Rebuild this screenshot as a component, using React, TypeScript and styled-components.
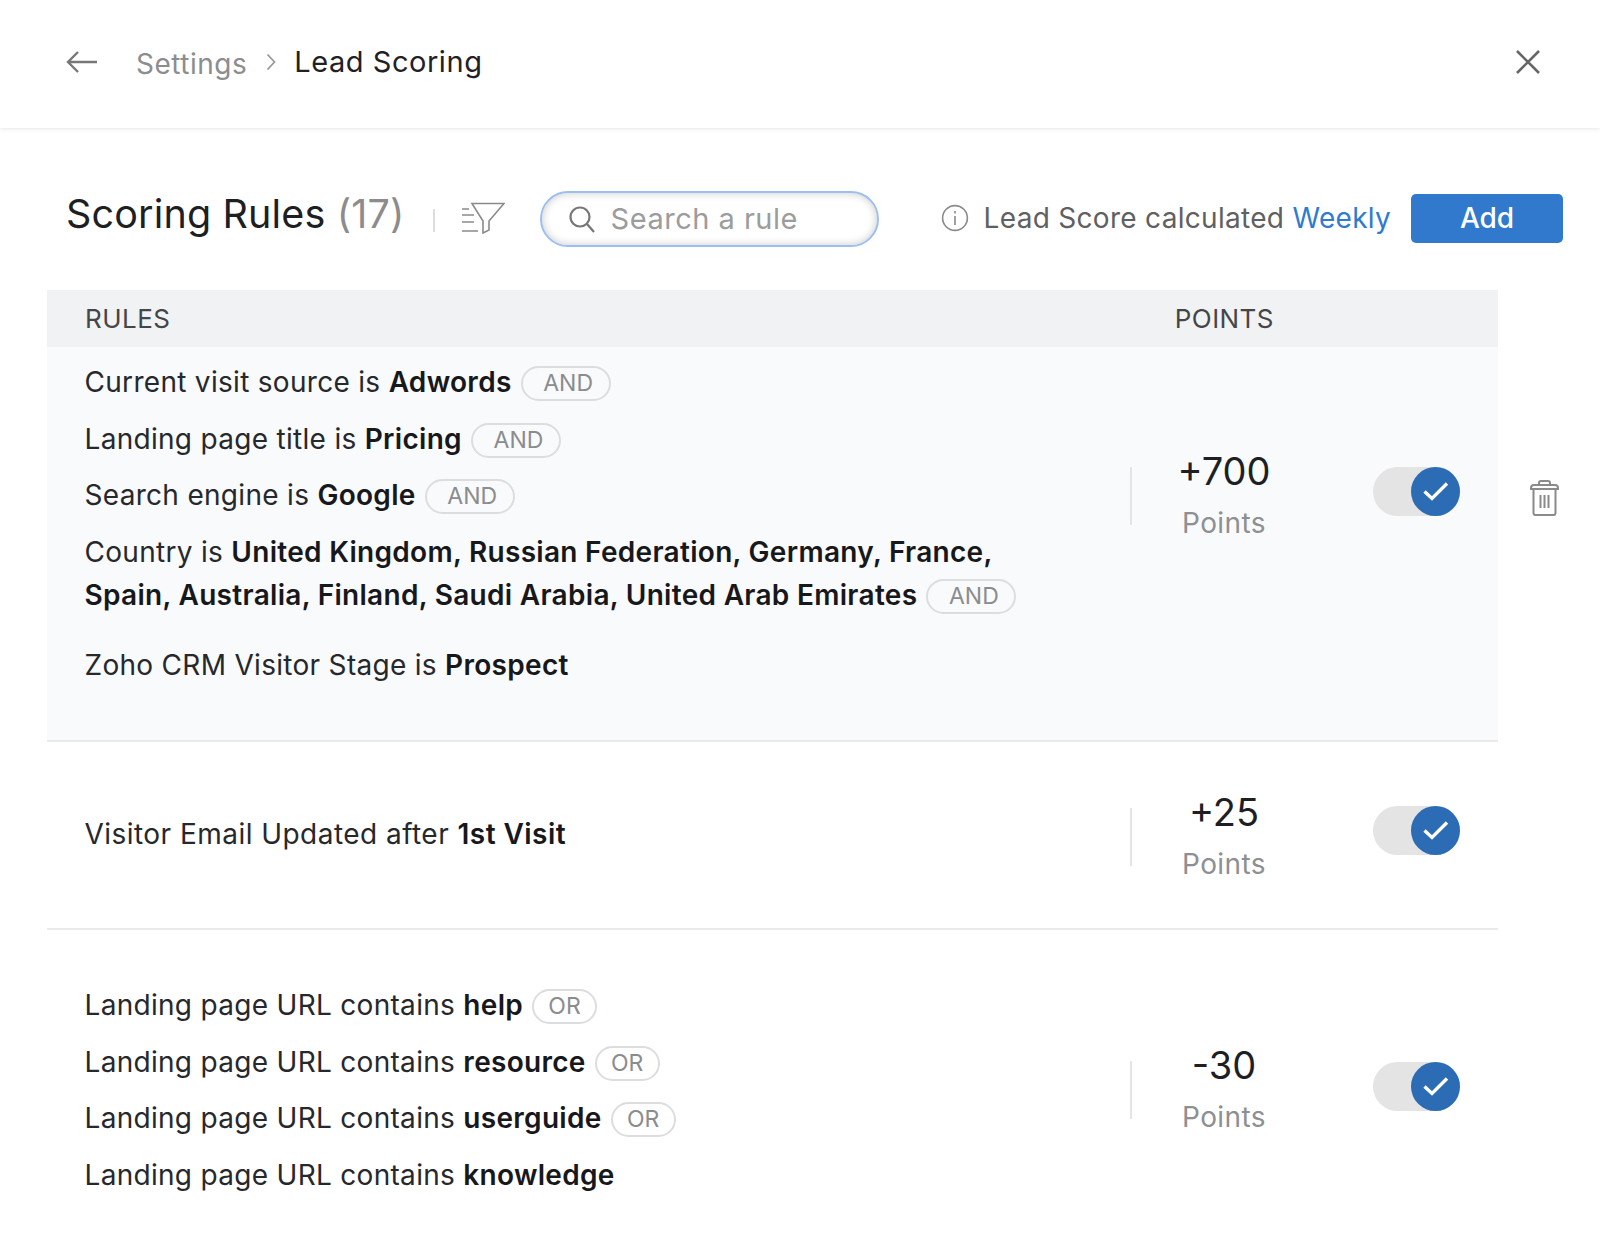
import styled, { createGlobalStyle } from "styled-components";
import { ReactNode } from "react";

const GlobalStyle = createGlobalStyle`
  * {
    box-sizing: border-box;
  }

  body {
    margin: 0;
    background: #ffffff;
    font-family: Inter, "Liberation Sans", sans-serif;
    color: #1d1f23;
    overflow: hidden;
  }
`;

type Line = { text: string; bold: ReactNode; tag?: string };

const firstRule: Line[] = [
  { text: "Current visit source is ", bold: "Adwords", tag: "AND" },
  { text: "Landing page title is ", bold: "Pricing", tag: "AND" },
  { text: "Search engine is ", bold: "Google", tag: "AND" },
];

const lastRule: Line[] = [
  { text: "Landing page URL contains ", bold: "help", tag: "OR" },
  { text: "Landing page URL contains ", bold: "resource", tag: "OR" },
  { text: "Landing page URL contains ", bold: "userguide", tag: "OR" },
  { text: "Landing page URL contains ", bold: "knowledge" },
];

function Toggle({ lift }: { lift: number }) {
  return (
    <Track $lift={lift}>
      <Knob>
        <svg width="26" height="20" viewBox="0 0 26 20" fill="none">
          <path d="M1.5 10.5 L9 17.5 L24 2.5" stroke="#fff" strokeWidth="3.4" />
        </svg>
      </Knob>
    </Track>
  );
}

function Score({ value }: { value: string }) {
  return (
    <ScoreCell>
      <ScoreValue>{value}</ScoreValue>
      <ScoreLabel>Points</ScoreLabel>
    </ScoreCell>
  );
}

function RuleLine({ line }: { line: Line }) {
  return (
    <RuleText>
      {line.text}
      <b>{line.bold}</b>
      {line.tag && <Tag $wide={line.tag === "AND"}>{line.tag}</Tag>}
    </RuleText>
  );
}

export default function App() {
  return (
    <Page>
      <GlobalStyle />
      <Header>
        <BackIcon width="32" height="24" viewBox="0 0 32 24" fill="none">
          <path d="M31 12 H2 M12 2 L2 12 L12 22" stroke="#777" strokeWidth="2.4" />
        </BackIcon>
        <Crumb>Settings</Crumb>
        <CrumbArrow width="10" height="18" viewBox="0 0 10 18" fill="none">
          <path d="M1.5 1.5 L8.5 9 L1.5 16.5" stroke="#999" strokeWidth="1.8" />
        </CrumbArrow>
        <Current>Lead Scoring</Current>
        <CloseIcon width="26" height="26" viewBox="0 0 26 26" fill="none">
          <path d="M2 2 L24 24 M24 2 L2 24" stroke="#666" strokeWidth="2.6" />
        </CloseIcon>
      </Header>

      <Toolbar>
        <Title>
          Scoring Rules <Count>(17)</Count>
        </Title>
        <ToolDivider />
        <svg width="43" height="32" viewBox="0 0 43 32" fill="none" stroke="#8a8a8a" strokeWidth="1.6">
          <path d="M10 1.5 H42 L27 19 V28 L21 31 V19 Z" />
          <path d="M0 7 H7 M0 13 H12 M0 20 H12 M0 29 H16" />
        </svg>
        <Search>
          <svg width="28" height="28" viewBox="0 0 28 28" fill="none" stroke="#777" strokeWidth="2.2">
            <circle cx="12" cy="12" r="9.5" />
            <path d="M19 19 L26 27" />
          </svg>
          <SearchInput placeholder="Search a rule" />
        </Search>
        <Calc>
          <svg width="28" height="28" viewBox="0 0 28 28" fill="none" stroke="#8a8a8a" strokeWidth="1.6">
            <circle cx="14" cy="14" r="12.4" />
            <path d="M14 12 V21 M14 7 V9.5" />
          </svg>
          <CalcText>
            Lead Score calculated <Weekly>Weekly</Weekly>
          </CalcText>
        </Calc>
        <AddButton>Add</AddButton>
      </Toolbar>

      <TableHead>
        <span>RULES</span>
        <PointsHead>POINTS</PointsHead>
      </TableHead>

      <RowWrap>
        <Row $shaded $height={395}>
          <Rules>
            {firstRule.map((line) => (
              <RuleLine key={line.bold as string} line={line} />
            ))}
            <Wrapped>
              Country is <b>United Kingdom, Russian Federation, Germany, France,</b>
              <br />
              <b>Spain, Australia, Finland, Saudi Arabia, United Arab Emirates</b>
              <Tag $wide>AND</Tag>
            </Wrapped>
            <LastLine>
              Zoho CRM Visitor Stage is <b>Prospect</b>
            </LastLine>
          </Rules>
          <Side $top={120}>
            <Score value="+700" />
            <Toggle lift={10} />
          </Side>
        </Row>
        <TrashIcon width="29" height="36" viewBox="0 0 29 36" fill="none" stroke="#8a8a8a" strokeWidth="2">
          <path d="M1 8 Q1 5 4 5 H25 Q28 5 28 8 V9 H1 Z" />
          <path d="M9 5 V3 Q9 1 11 1 H18 Q20 1 20 3 V5" />
          <path d="M3.5 9 V33 Q3.5 35 5.5 35 H23.5 Q25.5 35 25.5 33 V9" />
          <path d="M10.5 15 V28 M14.5 15 V28 M18.5 15 V28" />
        </TrashIcon>
      </RowWrap>

      <Row $height={188}>
        <Rules $center>
          <EmailLine>
            Visitor Email Updated after <b>1st Visit</b>
          </EmailLine>
        </Rules>
        <Side $top={66}>
          <Score value="+25" />
          <Toggle lift={14} />
        </Side>
      </Row>

      <Row $height={303} $last>
        <Rules $pad={54}>
          {lastRule.map((line) => (
            <RuleLine key={line.bold as string} line={line} />
          ))}
        </Rules>
        <Side $top={131}>
          <Score value="-30" />
          <Toggle lift={8} />
        </Side>
      </Row>
    </Page>
  );
}

const Page = styled.div`
  width: 1600px;
  height: 1233px;
  overflow: hidden;
`;

const Header = styled.header`
  height: 128px;
  padding: 0 59px 4px 66px;
  display: flex;
  align-items: center;
  background: #ffffff;
  box-shadow: 0 1px 4px rgba(0, 0, 0, 0.1);
`;

const BackIcon = styled.svg`
  margin-right: 38px;
`;

const Crumb = styled.span`
  font-size: 28px;
  line-height: 34px;
  color: #8b8d90;
  margin-top: 4px;
  letter-spacing: 0.5px;
`;

const CrumbArrow = styled.svg`
  margin: 0 18px 0 19px;
`;

const Current = styled.span`
  font-size: 29px;
  line-height: 34px;
  color: #1f2124;
  letter-spacing: 0.55px;
`;

const CloseIcon = styled.svg`
  margin-left: auto;
`;

const Toolbar = styled.div`
  height: 162px;
  padding: 18px 37px 0 67px;
  display: flex;
  align-items: center;
`;

const Title = styled.h1`
  margin: 0 0 8px -1px;
  font-size: 39.5px;
  font-weight: 400;
  letter-spacing: 0.15px;
  color: #1d1f23;
  white-space: nowrap;
`;

const Count = styled.span`
  color: #8c8c8c;
`;

const ToolDivider = styled.div`
  width: 2px;
  height: 23px;
  margin: 4px 27px 0 28px;
  background: #dddddd;
`;

const Search = styled.div`
  width: 339px;
  height: 56px;
  margin: 1px 0 0 35px;
  padding: 0 24px 0 26px;
  display: flex;
  align-items: center;
  gap: 13px;
  border: 2px solid #9dbff0;
  border-radius: 28px;
  background: #ffffff;
  box-shadow: inset 0 0 8px rgba(0, 0, 0, 0.22);
`;

const SearchInput = styled.input`
  width: 220px;
  border: none;
  outline: none;
  background: transparent;
  font: inherit;
  font-size: 29px;
  letter-spacing: 0.5px;

  &::placeholder {
    color: #9c9c9c;
    opacity: 1;
  }
`;

const Calc = styled.div`
  margin-left: 62px;
  display: flex;
  align-items: center;
  gap: 15px;
`;

const CalcText = styled.span`
  font-size: 28px;
  color: #5f6062;
  white-space: nowrap;
  letter-spacing: 0.3px;
`;

const Weekly = styled.span`
  color: #2f7bcf;
`;

const AddButton = styled.button`
  width: 152px;
  height: 49px;
  margin-left: auto;
  border: none;
  border-radius: 5px;
  background: #3079cc;
  color: #ffffff;
  font: inherit;
  font-size: 28px;
  font-weight: 500;
`;

const TableHead = styled.div`
  width: 1451px;
  height: 57px;
  margin-left: 47px;
  padding: 0 0 0 38px;
  display: flex;
  align-items: center;
  background: #f1f2f4;
  font-size: 26px;
  letter-spacing: 0.45px;
  color: #444649;
`;

const PointsHead = styled.span`
  margin-left: auto;
  margin-right: 224px;
`;

const RowWrap = styled.div`
  display: flex;
  align-items: flex-start;
`;

const Row = styled.div<{ $shaded?: boolean; $height: number; $last?: boolean }>`
  width: 1451px;
  height: ${(p) => p.$height}px;
  margin-left: 47px;
  display: flex;
  background: ${(p) => (p.$shaded ? "#f9fafc" : "#ffffff")};
  border-bottom: ${(p) => (p.$last ? "none" : "2px solid #e9eaec")};
`;

const Rules = styled.div<{ $center?: boolean; $pad?: number }>`
  flex: 1;
  padding: ${(p) => (p.$center ? 0 : p.$pad ?? 14)}px 0 0 37.5px;
  display: flex;
  flex-direction: column;
  justify-content: ${(p) => (p.$center ? "center" : "flex-start")};
  gap: 13px;
`;

const RuleText = styled.div`
  font-size: 28px;
  line-height: 43.5px;
  letter-spacing: 0.3px;
  color: #26282c;
  white-space: nowrap;

  b {
    font-weight: 600;
    color: #17181b;
  }
`;

const Wrapped = styled(RuleText)``;

const EmailLine = styled(RuleText)`
  letter-spacing: 0.46px;
`;

const LastLine = styled(RuleText)`
  margin-top: 13px;
`;

const Tag = styled.span<{ $wide?: boolean }>`
  display: inline-flex;
  align-items: center;
  justify-content: center;
  width: ${(p) => (p.$wide ? 90 : 65)}px;
  height: 35px;
  margin-left: 9px;
  padding-left: ${(p) => (p.$wide ? 5 : 0)}px;
  border: 2px solid #dcdddf;
  border-radius: 18px;
  vertical-align: 1px;
  font-size: 23px;
  letter-spacing: 0;
  color: #8a8c8e;
`;

const Side = styled.div<{ $top: number }>`
  width: 368px;
  margin-top: ${(p) => p.$top}px;
  height: 58px;
  display: flex;
  align-items: center;
  border-left: 2px solid #e4e5e8;
`;

const ScoreCell = styled.div`
  width: 184px;
  margin-top: -4px;
  display: flex;
  flex-direction: column;
  align-items: center;
`;

const ScoreValue = styled.div`
  font-size: 38px;
  line-height: 46px;
  color: #1d1f23;
`;

const ScoreLabel = styled.div`
  margin-top: 12px;
  font-size: 28px;
  line-height: 34px;
  letter-spacing: 0.4px;
  color: #8d8f92;
`;

const Track = styled.div<{ $lift: number }>`
  width: 87px;
  height: 49px;
  margin: -${(p) => p.$lift}px 0 0 57px;
  display: flex;
  justify-content: flex-end;
  border-radius: 25px;
  background: #e4e4e4;
`;

const Knob = styled.div`
  width: 49px;
  height: 49px;
  display: flex;
  align-items: center;
  justify-content: center;
  border-radius: 50%;
  background: #2b6cb4;
`;

const TrashIcon = styled.svg`
  margin: 133px 0 0 32px;
`;
